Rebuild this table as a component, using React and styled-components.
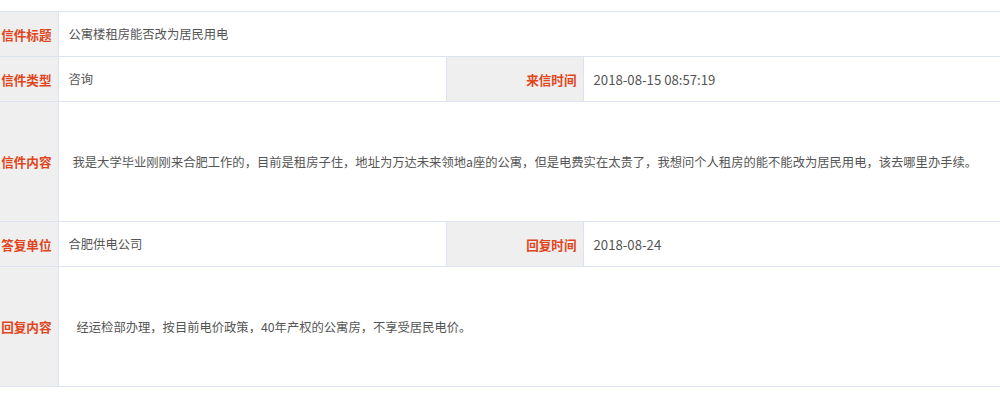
import React from "react";
import styled, { createGlobalStyle } from "styled-components";

const Global = createGlobalStyle`
  html, body { margin: 0; padding: 0; background: #fff; }
  body { font-family: "Noto Sans CJK SC", "Noto Sans", sans-serif; }
`;

const Page = styled.div`
  padding-top: 11px;
`;

const Table = styled.table`
  width: 1000px;
  border-collapse: collapse;
  table-layout: fixed;
  font-size: 12.3px;
`;

const Row = styled.tr`
  height: ${(p) => p.$h}px;
`;

const Label = styled.th`
  background: #efefef;
  color: #e0451c;
  font-weight: bold;
  font-size: 12.6px;
  text-align: right;
  padding: 0 6px 0 0;
  border: 1px solid #dde3ee;
  white-space: nowrap;
  vertical-align: middle;
  &:first-child { border-left: none; }
`;

const Value = styled.td`
  color: #555;
  font-size: ${(p) => p.$fs || 12.3}px;
  text-align: left;
  padding: 0 0 0 ${(p) => p.$pad || 10}px;
  border: 1px solid #dde3ee;
  white-space: nowrap;
  vertical-align: middle;
  &:last-child { border-right: none; }
`;

export default function App() {
  return (
    <>
      <Global />
      <Page>
        <Table>
          <colgroup>
            <col style={{ width: 58 }} />
            <col style={{ width: 388 }} />
            <col style={{ width: 137 }} />
            <col />
          </colgroup>
          <tbody>
            <Row $h={45}>
              <Label>信件标题</Label>
              <Value colSpan={3}>公寓楼租房能否改为居民用电</Value>
            </Row>
            <Row $h={45}>
              <Label>信件类型</Label>
              <Value>咨询</Value>
              <Label>来信时间</Label>
              <Value $fs={13.2}>2018-08-15 08:57:19</Value>
            </Row>
            <Row $h={120}>
              <Label>信件内容</Label>
              <Value colSpan={3} $pad={14}>
                我是大学毕业刚刚来合肥工作的，目前是租房子住，地址为万达未来领地a座的公寓，但是电费实在太贵了，我想问个人租房的能不能改为居民用电，该去哪里办手续。
              </Value>
            </Row>
            <Row $h={45}>
              <Label>答复单位</Label>
              <Value>合肥供电公司</Value>
              <Label>回复时间</Label>
              <Value $fs={13.2}>2018-08-24</Value>
            </Row>
            <Row $h={120}>
              <Label>回复内容</Label>
              <Value colSpan={3} $pad={18}>
                经运检部办理，按目前电价政策，40年产权的公寓房，不享受居民电价。
              </Value>
            </Row>
          </tbody>
        </Table>
      </Page>
    </>
  );
}
